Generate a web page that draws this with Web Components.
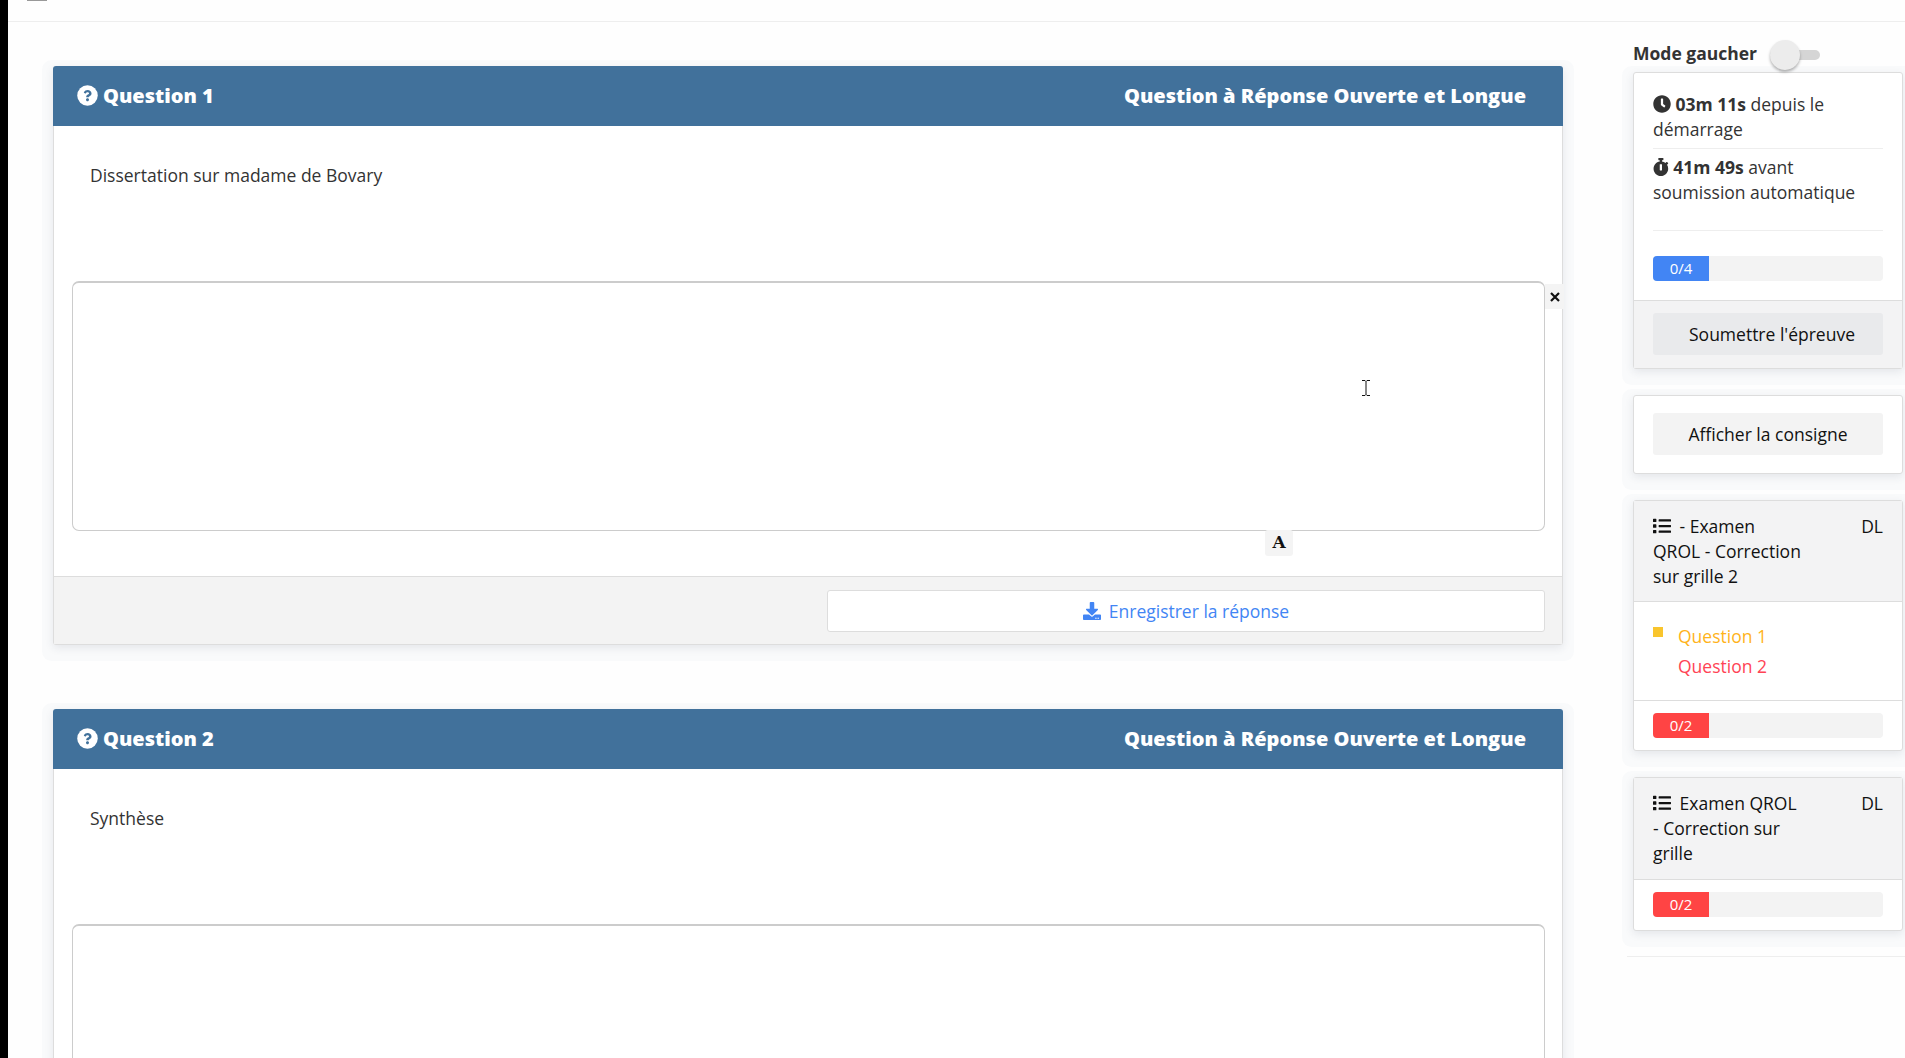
<!DOCTYPE html>
<html lang="fr">
<head>
<meta charset="utf-8">
<title>Épreuve</title>
<style>
  html, body { margin: 0; height: 100%; overflow: hidden; background: #fefefe; }
  body { font: 400 17.5px/25px "Open Sans", "Liberation Sans", sans-serif; color: #333; }
</style>
</head>
<body>
<exam-page>
  <q-card slot="main" title="Question 1" kind="Question à Réponse Ouverte et Longue" tools>
    Dissertation sur madame de Bovary
  </q-card>
  <q-card slot="main" title="Question 2" kind="Question à Réponse Ouverte et Longue">
    Synthèse
  </q-card>

  <mode-toggle slot="side">Mode gaucher</mode-toggle>

  <side-card slot="side">
    <card-part>
      <time-line icon="clock"><b>03m 11s</b> depuis le démarrage</time-line>
      <time-line icon="stopwatch" last><b>41m 49s</b> avant soumission automatique</time-line>
      <prog-bar value="0/4" color="#4285f4"></prog-bar>
    </card-part>
    <card-part kind="footer"><side-button dark shift>Soumettre l'épreuve</side-button></card-part>
  </side-card>

  <side-card slot="side">
    <card-part kind="plain"><side-button>Afficher la consigne</side-button></card-part>
  </side-card>

  <side-card slot="side">
    <card-part kind="head"><list-head tag="DL">- Examen QROL - Correction sur grille 2</list-head></card-part>
    <card-part kind="list">
      <nav-item color="#ffb31a" marked>Question 1</nav-item>
      <nav-item color="#ff4455">Question 2</nav-item>
    </card-part>
    <card-part kind="bar"><prog-bar value="0/2" color="#ff4444"></prog-bar></card-part>
  </side-card>

  <side-card slot="side">
    <card-part kind="head" tall><list-head tag="DL">Examen QROL - Correction sur grille</list-head></card-part>
    <card-part kind="bar" tall><prog-bar value="0/2" color="#ff4444"></prog-bar></card-part>
  </side-card>
</exam-page>

<script>
  const ICONS = {
    clock: ['0 0 512 512', 'M256,8C119,8,8,119,8,256S119,504,256,504,504,393,504,256,393,8,256,8Zm92.49,313h0l-20,25a16,16,0,0,1-22.49,2.5h0l-67-49.72a40,40,0,0,1-15-31.23V112a16,16,0,0,1,16-16h32a16,16,0,0,1,16,16V256l58,42.5A16,16,0,0,1,348.49,321Z'],
    stopwatch: ['0 0 448 512', 'M432 304c0 114.9-93.1 208-208 208S16 418.9 16 304c0-104 76.3-190.2 176-205.5V64h-28c-6.6 0-12-5.4-12-12V12c0-6.6 5.4-12 12-12h120c6.6 0 12 5.4 12 12v40c0 6.6-5.4 12-12 12h-28v34.5c37.5 5.8 71.7 21.6 99.7 44.6l27.5-27.5c4.7-4.7 12.3-4.7 17 0l28.3 28.3c4.7 4.7 4.7 12.3 0 17l-29.4 29.4-.6.6C419.7 223.3 432 262.2 432 304zm-176 36V188.5c0-6.6-5.4-12-12-12h-40c-6.6 0-12 5.4-12 12V340c0 6.6 5.4 12 12 12h40c6.6 0 12-5.4 12-12z'],
    list: ['0 0 512 512', 'M80 368H16a16 16 0 0 0-16 16v64a16 16 0 0 0 16 16h64a16 16 0 0 0 16-16v-64a16 16 0 0 0-16-16zm0-320H16A16 16 0 0 0 0 64v64a16 16 0 0 0 16 16h64a16 16 0 0 0 16-16V64a16 16 0 0 0-16-16zm0 160H16a16 16 0 0 0-16 16v64a16 16 0 0 0 16 16h64a16 16 0 0 0 16-16v-64a16 16 0 0 0-16-16zm416 176H176a16 16 0 0 0-16 16v32a16 16 0 0 0 16 16h320a16 16 0 0 0 16-16v-32a16 16 0 0 0-16-16zm0-320H176a16 16 0 0 0-16 16v32a16 16 0 0 0 16 16h320a16 16 0 0 0 16-16V80a16 16 0 0 0-16-16zm0 160H176a16 16 0 0 0-16 16v32a16 16 0 0 0 16 16h320a16 16 0 0 0 16-16v-32a16 16 0 0 0-16-16z'],
    download: ['0 0 512 512', 'M216 0h80c13.3 0 24 10.7 24 24v168h87.7c17.8 0 26.7 21.5 14.1 34.1L269.7 378.3c-7.5 7.5-19.8 7.5-27.3 0L90.1 226.1c-12.6-12.6-3.7-34.1 14.1-34.1H192V24c0-13.3 10.7-24 24-24zm296 376v112c0 13.3-10.7 24-24 24H24c-13.3 0-24-10.7-24-24V376c0-13.3 10.7-24 24-24h146.7l49 49c20.1 20.1 52.5 20.1 72.6 0l49-49H488c13.3 0 24 10.7 24 24zm-124 88c0-11-9-20-20-20s-20 9-20 20 9 20 20 20 20-9 20-20zm64 0c0-11-9-20-20-20s-20 9-20 20 9 20 20 20 20-9 20-20z'],
  };

  const iconSvg = (name, size) => {
    const [box, d] = ICONS[name];
    return `<svg viewBox="${box}" height="${size}" fill="currentColor" style="display:inline-block;flex:none"><path d="${d}"/></svg>`;
  };

  // white disc with a smaller question mark than the stock glyph
  const questionBadge = `<svg viewBox="0 0 512 512" width="21" height="21" style="flex:none;position:relative;top:-1px">
    <circle cx="256" cy="256" r="250" fill="#fff"/>
    <path transform="translate(256 256) scale(.8) translate(-256 -256)" fill="#41719b" d="M262.655 90c-54.497 0-89.255 22.957-116.549 63.758-3.536 5.286-2.353 12.415 2.715 16.258l34.699 26.31c5.205 3.947 12.621 3.008 16.665-2.122 17.864-22.658 30.113-35.797 57.303-35.797 20.429 0 45.698 13.148 45.698 32.958 0 14.976-12.363 22.667-32.534 33.976C247.128 238.528 216 254.941 216 296v4c0 6.627 5.373 12 12 12h56c6.627 0 12-5.373 12-12v-1.333c0-28.462 83.186-29.647 83.186-106.667 0-58.002-60.165-102-116.531-102zM256 338c-25.365 0-46 20.635-46 46 0 25.364 20.635 46 46 46s46-20.636 46-46c0-25.365-20.635-46-46-46z"/>
  </svg>`;

  const SHADOW = '0 3px 8px rgba(50,60,90,.1), 0 5px 0 11px #f9fafb';

  class ExamPage extends HTMLElement {
    constructor() {
      super();
      this.attachShadow({ mode: 'open' }).innerHTML = `
        <style>
          :host { display: flex; height: 1058px; overflow: hidden; }
          .strip { width: 8px; flex: none; background: #000; }
          .wrap { flex: 1; min-width: 0; display: flex; flex-direction: column; }
          .top { height: 21px; flex: none; border-bottom: 1px solid #eee; position: relative; }
          .top i { position: absolute; left: 19px; top: 0; width: 20px; height: 1px; background: #999; }
          .row { flex: 1; display: flex; min-height: 0; }
          .main { width: 1510px; flex: none; margin: 44px 0 0 45px; display: flex; flex-direction: column; gap: 64px; }
          .side { width: 270px; flex: none; margin: 17px 2px 0 70px; display: flex; flex-direction: column; position: relative; }
          .rule { height: 1px; background: #eee; margin: -1px -2px 0 -6px; }
          .cursor { position: absolute; left: 1362px; top: 380px; color: #111; }
        </style>
        <div class="strip"></div>
        <div class="wrap">
          <div class="top"><i></i></div>
          <div class="row">
            <div class="main"><slot name="main"></slot></div>
            <div class="side"><slot name="side"></slot><div class="rule"></div></div>
          </div>
        </div>
        <svg class="cursor" width="8" height="16" viewBox="0 0 8 16" fill="none" stroke="currentColor" stroke-width="1"><path d="M0 .5h3l1 1 1-1h3M4 1.5v13M0 15.5h3l1-1 1 1h3"/></svg>`;
    }
  }

  class QCard extends HTMLElement {
    constructor() {
      super();
      const tools = this.hasAttribute('tools');
      this.attachShadow({ mode: 'open' }).innerHTML = `
        <style>
          :host { display: block; flex: none; background: #fff; border-radius: 3px; box-shadow: ${SHADOW}; }
          header { height: 60px; background: #41719b; color: #fff; border-radius: 3px 3px 0 0; display: flex; align-items: center; justify-content: space-between; padding: 0 37px 0 24px; font-size: 20px; }
          h2 { margin: 0; font: inherit; font-weight: 800; display: flex; align-items: center; gap: 5px; }
          h2 b, header span { font-weight: 800; position: relative; top: -1px; }
          .frame { border: solid #ddd; border-width: 0 1px 1px; border-radius: 0 0 3px 3px; }
          .prompt { height: 155px; box-sizing: border-box; padding: 37px 0 0 36px; color: #333; }
          .box { position: relative; margin: 0 17px 0 18px; height: 250px; box-sizing: border-box; border: 1px solid #ccc; border-top-width: 2px; border-radius: 7px; }
          .close { position: absolute; right: -20px; top: 1px; width: 19px; height: 25px; background: #f4f4f4; display: flex; align-items: center; justify-content: center; color: #111; }
          .font { position: absolute; left: 1192px; bottom: -26px; width: 28px; height: 26px; background: #f4f4f4; border-radius: 3px; text-align: center; font: 700 17px/24px "DejaVu Serif", serif; color: #111; }
          .gap { height: 45px; }
          footer { height: 68px; box-sizing: border-box; background: #f3f3f3; border-top: 1px solid #ddd; padding: 13px 17px 0; display: flex; justify-content: flex-end; align-items: flex-start; }
          .save { width: 718px; height: 42px; box-sizing: border-box; background: #fff; border: 1px solid #ddd; border-radius: 3px; color: #4285f4; display: flex; align-items: center; justify-content: center; gap: 8px; }
        </style>
        <header>
          <h2>${questionBadge}<b>${this.getAttribute('title')}</b></h2>
          <span>${this.getAttribute('kind')}</span>
        </header>
        <div class="frame">
          <div class="prompt"><slot></slot></div>
          <div class="box">
            ${tools ? `<div class="close"><svg width="10" height="10" viewBox="0 0 10 10" stroke="currentColor" stroke-width="2.2"><path d="M1 1l8 8M9 1l-8 8"/></svg></div><div class="font">A</div>` : ''}
          </div>
          ${tools ? `<div class="gap"></div><footer><div class="save">${iconSvg('download', 18)}<span>Enregistrer la réponse</span></div></footer>` : ''}
        </div>`;
    }
  }

  class ModeToggle extends HTMLElement {
    constructor() {
      super();
      this.attachShadow({ mode: 'open' }).innerHTML = `
        <style>
          :host { display: flex; align-items: center; height: 30px; margin-bottom: 3px; font-weight: 700; color: #333; }
          span { margin-bottom: 2px; }
          .track { margin: 1px 0 0 13px; width: 50px; height: 10px; border-radius: 5px; background: #d5d5d5; position: relative; }
          .thumb { position: absolute; left: 0; top: -10px; width: 30px; height: 30px; border-radius: 50%; background: #ececec; box-shadow: 0 2px 3px rgba(0,0,0,.3); }
        </style>
        <span><slot></slot></span><div class="track"><div class="thumb"></div></div>`;
    }
  }

  class SideCard extends HTMLElement {
    constructor() {
      super();
      this.attachShadow({ mode: 'open' }).innerHTML = `
        <style>
          :host { display: block; flex: none; margin-bottom: 26px; background: #fff; border: 1px solid #ddd; border-radius: 3px; box-shadow: ${SHADOW}; }
        </style>
        <slot></slot>`;
    }
  }

  class CardPart extends HTMLElement {
    constructor() {
      super();
      this.attachShadow({ mode: 'open' }).innerHTML = `
        <style>
          :host { display: block; padding: 19px 19px 19px; }
          :host([kind=footer]) { background: #f3f3f4; border-top: 1px solid #ddd; padding: 12px 19px 13px; }
          :host([kind=plain]) { padding: 17px 19px 18px; }
          :host([kind=head]) { background: #f3f3f4; border-bottom: 1px solid #ddd; padding: 13px 19px 12px; height: 75px; }
          :host([kind=head][tall]) { padding-bottom: 13px; }
          :host([kind=list]) { padding: 19px 19px 19px; border-bottom: 1px solid #ddd; height: 60px; }
          :host([kind=bar]) { padding: 12px 19px; }
          :host([kind=bar][tall]) { padding-bottom: 13px; }
        </style>
        <slot></slot>`;
    }
  }

  class TimeLine extends HTMLElement {
    constructor() {
      super();
      const last = this.hasAttribute('last');
      this.attachShadow({ mode: 'open' }).innerHTML = `
        <style>
          :host { display: block; padding-bottom: ${last ? 25 : 6}px; margin-bottom: ${last ? 25 : 6}px; border-bottom: 1px solid #eee; color: #333; }
          svg { vertical-align: -2px; color: #333; }
        </style>
        ${iconSvg(this.getAttribute('icon'), 18)} <slot></slot>`;
    }
  }

  class ProgBar extends HTMLElement {
    constructor() {
      super();
      this.attachShadow({ mode: 'open' }).innerHTML = `
        <style>
          :host { display: block; height: 25px; background: #f3f3f3; border-radius: 4px; overflow: hidden; }
          div { width: 56px; height: 25px; background: ${this.getAttribute('color')}; color: #fff; font-size: 15px; line-height: 25px; text-align: center; }
        </style>
        <div>${this.getAttribute('value')}</div>`;
    }
  }

  class SideButton extends HTMLElement {
    constructor() {
      super();
      const bg = this.hasAttribute('dark') ? '#e9eaec' : '#f3f3f3';
      const shift = this.hasAttribute('shift') ? 8 : 0;
      this.attachShadow({ mode: 'open' }).innerHTML = `
        <style>
          :host { display: block; height: 42px; box-sizing: border-box; background: ${bg}; border-radius: 3px; line-height: 42px; text-align: center; color: #111; padding-left: ${shift}px; }
        </style>
        <slot></slot>`;
    }
  }

  class ListHead extends HTMLElement {
    constructor() {
      super();
      this.attachShadow({ mode: 'open' }).innerHTML = `
        <style>
          :host { display: flex; justify-content: space-between; color: #111; }
          .title { width: 149px; }
          svg { vertical-align: -2px; margin-right: 4px; }
        </style>
        <div class="title">${iconSvg('list', 18)} <slot></slot></div>
        <div>${this.getAttribute('tag')}</div>`;
    }
  }

  class NavItem extends HTMLElement {
    constructor() {
      super();
      const marked = this.hasAttribute('marked');
      this.attachShadow({ mode: 'open' }).innerHTML = `
        <style>
          :host { display: block; position: relative; padding-left: 25px; line-height: 30px; color: ${this.getAttribute('color')}; }
          i { position: absolute; left: 0; top: 6px; width: 10px; height: 10px; background: #f9c52d; }
        </style>
        ${marked ? '<i></i>' : ''}<slot></slot>`;
    }
  }

  customElements.define('exam-page', ExamPage);
  customElements.define('q-card', QCard);
  customElements.define('mode-toggle', ModeToggle);
  customElements.define('side-card', SideCard);
  customElements.define('card-part', CardPart);
  customElements.define('time-line', TimeLine);
  customElements.define('prog-bar', ProgBar);
  customElements.define('side-button', SideButton);
  customElements.define('list-head', ListHead);
  customElements.define('nav-item', NavItem);
</script>
</body>
</html>
